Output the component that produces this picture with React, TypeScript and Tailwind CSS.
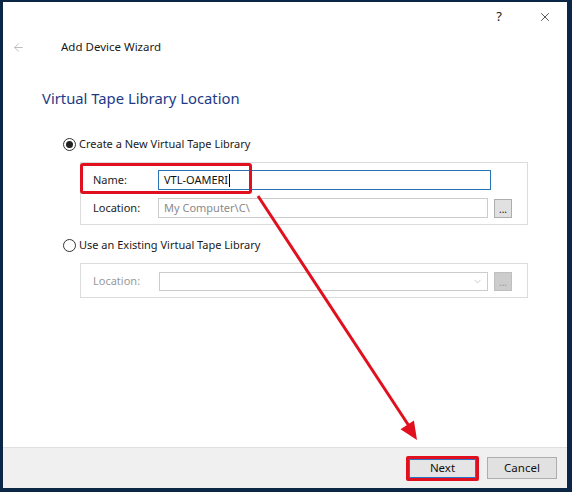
import React from "react";
import { ArrowLeft, X, ChevronDown } from "lucide-react";

const Radio = ({ checked, label }: { checked?: boolean; label: string }) => (
  <div className="flex items-center h-[16px] ml-[60px] text-[11px] text-[#1a1a1a]">
    <span className="flex items-center justify-center w-[13px] h-[13px] rounded-full border border-[#333] bg-white mr-[3px]">
      {checked && <span className="w-[7px] h-[7px] rounded-full bg-[#222]" />}
    </span>
    {label}
  </div>
);

const DotsButton = ({ disabled }: { disabled?: boolean }) => (
  <div
    className={
      disabled
        ? "ml-[6px] w-[18px] h-[19px] bg-[#cccccc] border border-[#bfbfbf] flex items-end justify-center pb-[3px] text-[10px] leading-none text-[#999]"
        : "ml-[6px] w-[18px] h-[19px] bg-[#e1e1e1] border border-[#adadad] flex items-end justify-center pb-[3px] text-[10px] leading-none text-[#111]"
    }
  >
    ...
  </div>
);

export default function App() {
  return (
    <div className="w-[572px] h-[492px] bg-[#0b2745] pt-[2px] pl-[3px] pr-[5px] pb-[4px]">
      <div className="relative flex h-full flex-col bg-white font-['Noto_Sans',sans-serif]">
        {/* title bar */}
        <div className="flex h-[30px] items-center justify-end text-[#222]">
          <span className="text-[13px] mr-[36px]">?</span>
          <X className="w-[14px] h-[14px] mr-[15px]" strokeWidth={1.3} />
        </div>

        {/* header */}
        <div className="flex h-[30px] items-center">
          <ArrowLeft className="ml-[9px] w-[13px] h-[13px] text-[#b5b5b5]" strokeWidth={1.6} />
          <span className="ml-[36px] text-[11.5px] text-[#1a1a1a]">Add Device Wizard</span>
        </div>

        <h1 className="mt-[26px] ml-[39px] h-[20px] text-[14.8px] leading-[20px] text-[#1c3a86]">
          Virtual Tape Library Location
        </h1>

        <div className="mt-[28px]">
          <Radio checked label="Create a New Virtual Tape Library" />
        </div>

        <div className="mt-[10px] ml-[77px] w-[448px] h-[63px] border border-[#dcdcdc] pl-[12px] pt-[7px] text-[11px]">
          <div className="flex items-center h-[20px]">
            <span className="w-[65px] text-[#222]">Name:</span>
            <div className="w-[333px] h-[20px] border border-[#2a73b4] flex items-center px-[5px] text-[#111]">
              VTL-OAMERI<span className="ml-[1px] w-[1px] h-[13px] bg-black" />
            </div>
          </div>
          <div className="flex items-center h-[20px] mt-[8px]">
            <span className="w-[65px] text-[#222]">Location:</span>
            <div className="w-[330px] h-[20px] border border-[#cccccc] flex items-center px-[5px] text-[#8a8a8a]">
              My Computer\C\
            </div>
            <DotsButton />
          </div>
        </div>

        <div className="mt-[12px]">
          <Radio label="Use an Existing Virtual Tape Library" />
        </div>

        <div className="mt-[10px] ml-[77px] w-[448px] h-[35px] border border-[#dcdcdc] pl-[12px] pt-[8px] text-[11px]">
          <div className="flex items-center h-[19px]">
            <span className="w-[66px] text-[#9a9a9a]">Location:</span>
            <div className="w-[329px] h-[19px] border border-[#cccccc] flex items-center justify-end pr-[4px]">
              <ChevronDown className="w-[11px] h-[11px] text-[#aaa]" strokeWidth={1.3} />
            </div>
            <DotsButton disabled />
          </div>
        </div>

        <div className="flex-1" />

        {/* footer */}
        <div className="h-[41px] border-t border-[#dfdfdf] bg-[#f0f0f0] flex items-center justify-end pr-[10px] text-[11.5px]">
          <div className="w-[73px] h-[25px] border-[3px] border-[#e0101e] rounded-[2px] flex">
            <div className="flex-1 border border-[#2a73c8] bg-[#e5e5e5] flex items-center justify-center text-[#111]">
              Next
            </div>
          </div>
          <div className="ml-[8px] w-[70px] h-[22px] border border-[#adadad] bg-[#e1e1e1] flex items-center justify-center text-[#111]">
            Cancel
          </div>
        </div>

        {/* highlight box around Name */}
        <div className="absolute left-[77px] top-[161px] w-[172px] h-[31px] border-[3px] border-[#e0101e] rounded-[3px]" />

        {/* annotation arrow */}
        <svg className="absolute left-0 top-0 pointer-events-none" width="564" height="486" viewBox="0 0 564 486">
          <line x1="255" y1="194" x2="408" y2="427" stroke="#e0101e" strokeWidth="3" />
          <polygon points="414,438 397.5,427.3 410.9,418.5" fill="#e0101e" />
        </svg>
      </div>
    </div>
  );
}
